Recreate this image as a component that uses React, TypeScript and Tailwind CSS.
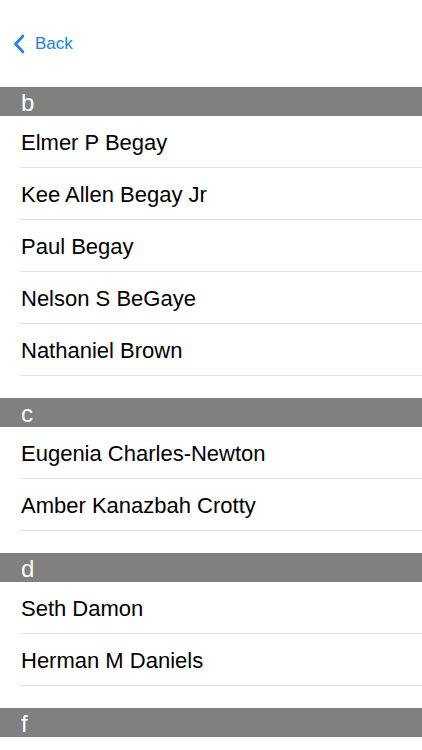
const SECTIONS: { letter: string; names: string[] }[] = [
  { letter: 'b', names: ['Elmer P Begay', 'Kee Allen Begay Jr', 'Paul Begay', 'Nelson S BeGaye', 'Nathaniel Brown'] },
  { letter: 'c', names: ['Eugenia Charles-Newton', 'Amber Kanazbah Crotty'] },
  { letter: 'd', names: ['Seth Damon', 'Herman M Daniels'] },
  { letter: 'f', names: [] },
];

export default function App() {
  return (
    <div className="w-[422px] h-[750px] overflow-hidden bg-white" style={{ fontFamily: '"Liberation Sans", Arial, sans-serif' }}>
      {/* Nav bar */}
      <div className="h-[87px] flex items-start pt-[32px] pl-[13px]">
        <button className="flex items-center gap-[10px] text-[#2080e5]">
          <svg width="12" height="20" viewBox="0 0 12 20" fill="none">
            <path d="M10 2 L2.5 10 L10 18" stroke="currentColor" strokeWidth="2.6" strokeLinecap="round" strokeLinejoin="round" />
          </svg>
          <span className="text-[17px] leading-[24px]">Back</span>
        </button>
      </div>

      {SECTIONS.map((s) => (
        <div key={s.letter} className="mb-[22px]">
          <div className="h-[29px] bg-[#808080] flex items-center pl-[21px] pt-[2px]">
            <span className="text-white text-[24px] leading-none">{s.letter}</span>
          </div>
          {s.names.map((n) => (
            <div key={n} className="pl-[20px]">
              <div className="h-[52px] flex items-center border-b border-[#e2e2e2] pl-[1px] pt-[2px] box-border">
                <span className="text-black text-[22px]">{n}</span>
              </div>
            </div>
          ))}
        </div>
      ))}
    </div>
  );
}
